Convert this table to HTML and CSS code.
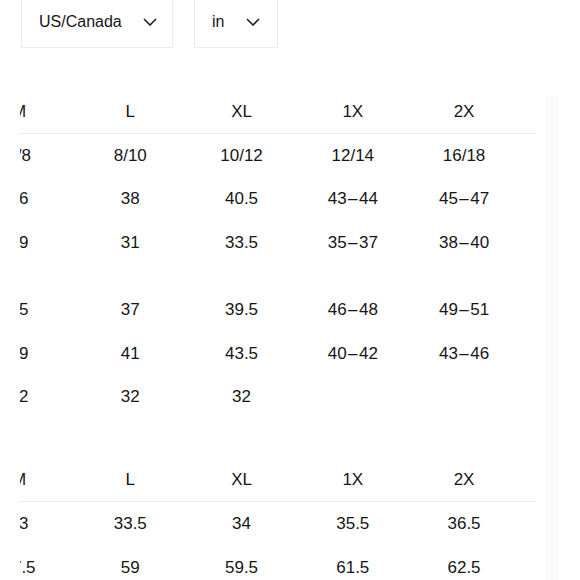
FILE: index.html
```html
<!DOCTYPE html>
<html lang="en">
<head>
<meta charset="utf-8">
<title>Size chart</title>
<link rel="stylesheet" href="styles.css">
</head>
<body>
<div class="filters">
  <div class="select select-region">
    <span>US/Canada</span>
    <svg class="chev" width="14" height="8" viewBox="0 0 14 8"><polyline points="1,1 7,7 13,1" fill="none" stroke="#222" stroke-width="1.6"/></svg>
  </div>
  <div class="select select-unit">
    <span>in</span>
    <svg class="chev" width="14" height="8" viewBox="0 0 14 8"><polyline points="1,1 7,7 13,1" fill="none" stroke="#222" stroke-width="1.6"/></svg>
  </div>
</div>

<div class="content">
  <div class="viewport">
    <div class="table">
      <div class="row head"><span>M</span><span>L</span><span>XL</span><span>1X</span><span>2X</span></div>
      <div class="row"><span>6/8</span><span>8/10</span><span>10/12</span><span>12/14</span><span>16/18</span></div>
      <div class="row"><span>36</span><span>38</span><span>40.5</span><span>43&#8202;&#8211;&#8202;44</span><span>45&#8202;&#8211;&#8202;47</span></div>
      <div class="row"><span>29</span><span>31</span><span>33.5</span><span>35&#8202;&#8211;&#8202;37</span><span>38&#8202;&#8211;&#8202;40</span></div>

      <div class="row section"><span>35</span><span>37</span><span>39.5</span><span>46&#8202;&#8211;&#8202;48</span><span>49&#8202;&#8211;&#8202;51</span></div>
      <div class="row"><span>39</span><span>41</span><span>43.5</span><span>40&#8202;&#8211;&#8202;42</span><span>43&#8202;&#8211;&#8202;46</span></div>
      <div class="row"><span>32</span><span>32</span><span>32</span><span></span><span></span></div>

      <div class="row head section-b"><span>M</span><span>L</span><span>XL</span><span>1X</span><span>2X</span></div>
      <div class="row tall"><span>33</span><span>33.5</span><span>34</span><span>35.5</span><span>36.5</span></div>
      <div class="row tall"><span>57.5</span><span>59</span><span>59.5</span><span>61.5</span><span>62.5</span></div>
    </div>
  </div>
  <div class="shade"></div>
</div>
</body>
</html>
```

FILE: styles.css
```css
html, body {
  margin: 0;
  padding: 0;
  background: #ffffff;
}

body {
  width: 580px;
  height: 580px;
  overflow: hidden;
  font-family: "Liberation Sans", Arial, sans-serif;
  color: #161616;
}

.filters {
  display: flex;
  gap: 21px;
  margin-top: -8px;
  padding-left: 21px;
}

.select {
  display: flex;
  align-items: center;
  height: 56px;
  border: 1px solid #ececec;
  box-sizing: border-box;
  font-size: 16px;
  padding-top: 3px;
}

.select-region {
  width: 152px;
  padding-left: 17px;
  gap: 21px;
}

.select-unit {
  width: 84px;
  padding-left: 17px;
  gap: 22px;
}

.chev {
  display: block;
}

.content {
  display: flex;
  gap: 10px;
  margin-top: 42px;
  padding-left: 20px;
}

.viewport {
  width: 515px;
  overflow: hidden;
}

.table {
  margin-left: -56.6px;
  width: calc(100% + 56.6px);
}

.row {
  display: grid;
  grid-template-columns: repeat(5, 111.25px);
  height: 43.5px;
  align-items: center;
  font-size: 17px;
}

.row span {
  text-align: center;
  white-space: nowrap;
}

.row.head {
  height: 43px;
  border-bottom: 1px solid #ebebeb;
}

.row.section {
  margin-top: 24px;
}

.row.head.section-b {
  margin-top: 39px;
}

.row.tall {
  height: 44px;
}

.shade {
  width: 14px;
  margin-top: 6px;
  background: #fcfcfc;
}
```
